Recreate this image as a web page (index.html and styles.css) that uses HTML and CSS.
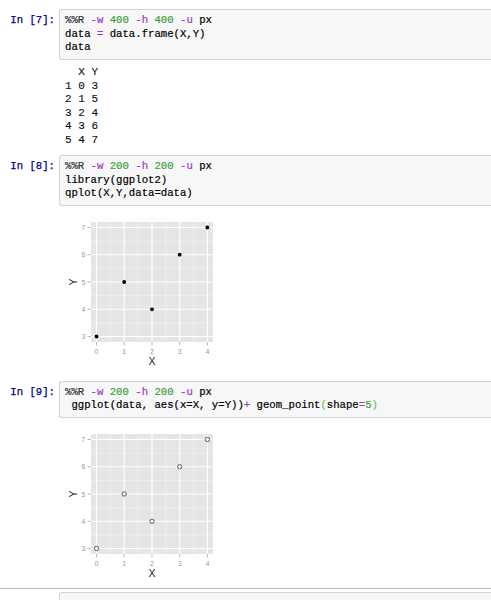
FILE: index.html
```
<!DOCTYPE html>
<html>
<head>
<meta charset="utf-8">
<link rel="stylesheet" href="styles.css">
</head>
<body>
<div class="notebook">

  <div class="cell first">
    <div class="row">
      <div class="prompt">In [7]:</div>
      <pre class="input"><span class="mg">%%R</span> <span class="op">-w</span> <span class="num">400</span> <span class="op">-h</span> <span class="num">400</span> <span class="op">-u</span> px
data <span class="op">=</span> data.frame(X,Y)
data</pre>
    </div>
    <div class="row">
      <div class="prompt"></div>
      <pre class="output-text">  X Y
1 0 3
2 1 5
3 2 4
4 3 6
5 4 7</pre>
    </div>
  </div>

  <div class="cell">
    <div class="row">
      <div class="prompt">In [8]:</div>
      <pre class="input"><span class="mg">%%R</span> <span class="op">-w</span> <span class="num">200</span> <span class="op">-h</span> <span class="num">200</span> <span class="op">-u</span> px
library(ggplot2)
qplot(X,Y,data=data)</pre>
    </div>
    <div class="row">
      <div class="prompt"></div>
      <div class="output-plot">
        <svg class="plot" width="160" height="160" viewBox="0 0 160 160">
          <rect x="26" y="11" width="122" height="120" fill="#e5e5e5"/>
          <g stroke="#f4f4f4" stroke-width="0.6">
            <line x1="45.4" y1="11" x2="45.4" y2="131"/><line x1="73.1" y1="11" x2="73.1" y2="131"/>
            <line x1="100.8" y1="11" x2="100.8" y2="131"/><line x1="128.6" y1="11" x2="128.6" y2="131"/>
            <line x1="26" y1="111.9" x2="148" y2="111.9"/><line x1="26" y1="84.6" x2="148" y2="84.6"/>
            <line x1="26" y1="57.4" x2="148" y2="57.4"/><line x1="26" y1="30.1" x2="148" y2="30.1"/>
          </g>
          <g stroke="#ffffff" stroke-width="1.1">
            <line x1="31.5" y1="11" x2="31.5" y2="131"/><line x1="59.2" y1="11" x2="59.2" y2="131"/>
            <line x1="87" y1="11" x2="87" y2="131"/><line x1="114.7" y1="11" x2="114.7" y2="131"/>
            <line x1="142.4" y1="11" x2="142.4" y2="131"/>
            <line x1="26" y1="125.5" x2="148" y2="125.5"/><line x1="26" y1="98.3" x2="148" y2="98.3"/>
            <line x1="26" y1="71" x2="148" y2="71"/><line x1="26" y1="43.7" x2="148" y2="43.7"/>
            <line x1="26" y1="16.5" x2="148" y2="16.5"/>
          </g>
          <g stroke="#8a8a8a" stroke-width="0.6">
            <line x1="22.5" y1="125.5" x2="26" y2="125.5"/><line x1="22.5" y1="98.3" x2="26" y2="98.3"/>
            <line x1="22.5" y1="71" x2="26" y2="71"/><line x1="22.5" y1="43.7" x2="26" y2="43.7"/>
            <line x1="22.5" y1="16.5" x2="26" y2="16.5"/>
            <line x1="31.5" y1="131" x2="31.5" y2="134.5"/><line x1="59.2" y1="131" x2="59.2" y2="134.5"/>
            <line x1="87" y1="131" x2="87" y2="134.5"/><line x1="114.7" y1="131" x2="114.7" y2="134.5"/>
            <line x1="142.4" y1="131" x2="142.4" y2="134.5"/>
          </g>
          <g class="tick-label" text-anchor="end">
            <text x="20.5" y="128">3</text><text x="20.5" y="100.8">4</text>
            <text x="20.5" y="73.5">5</text><text x="20.5" y="46.2">6</text>
            <text x="20.5" y="19">7</text>
          </g>
          <g class="tick-label" text-anchor="middle">
            <text x="31.5" y="142.5">0</text><text x="59.2" y="142.5">1</text>
            <text x="87" y="142.5">2</text><text x="114.7" y="142.5">3</text>
            <text x="142.4" y="142.5">4</text>
          </g>
          <text class="axis-title" x="87" y="153.5" text-anchor="middle">X</text>
          <text class="axis-title" x="0" y="0" text-anchor="middle" transform="translate(11.5 71) rotate(-90)">Y</text>
          <g fill="#000">
            <circle cx="31.5" cy="125.5" r="1.9"/><circle cx="59.2" cy="71" r="1.9"/>
            <circle cx="87" cy="98.3" r="1.9"/><circle cx="114.7" cy="43.7" r="1.9"/>
            <circle cx="142.4" cy="16.5" r="1.9"/>
          </g>
        </svg>
      </div>
    </div>
  </div>

  <div class="cell">
    <div class="row">
      <div class="prompt">In [9]:</div>
      <pre class="input"><span class="mg">%%R</span> <span class="op">-w</span> <span class="num">200</span> <span class="op">-h</span> <span class="num">200</span> <span class="op">-u</span> px
 ggplot(data, aes(x=X, y=Y))<span class="op">+</span> geom_point<span class="par">(</span>shape<span class="op">=</span><span class="num">5</span><span class="par">)</span></pre>
    </div>
    <div class="row">
      <div class="prompt"></div>
      <div class="output-plot">
        <svg class="plot" width="160" height="160" viewBox="0 0 160 160">
          <rect x="26" y="11" width="122" height="120" fill="#e5e5e5"/>
          <g stroke="#f4f4f4" stroke-width="0.6">
            <line x1="45.4" y1="11" x2="45.4" y2="131"/><line x1="73.1" y1="11" x2="73.1" y2="131"/>
            <line x1="100.8" y1="11" x2="100.8" y2="131"/><line x1="128.6" y1="11" x2="128.6" y2="131"/>
            <line x1="26" y1="111.9" x2="148" y2="111.9"/><line x1="26" y1="84.6" x2="148" y2="84.6"/>
            <line x1="26" y1="57.4" x2="148" y2="57.4"/><line x1="26" y1="30.1" x2="148" y2="30.1"/>
          </g>
          <g stroke="#ffffff" stroke-width="1.1">
            <line x1="31.5" y1="11" x2="31.5" y2="131"/><line x1="59.2" y1="11" x2="59.2" y2="131"/>
            <line x1="87" y1="11" x2="87" y2="131"/><line x1="114.7" y1="11" x2="114.7" y2="131"/>
            <line x1="142.4" y1="11" x2="142.4" y2="131"/>
            <line x1="26" y1="125.5" x2="148" y2="125.5"/><line x1="26" y1="98.3" x2="148" y2="98.3"/>
            <line x1="26" y1="71" x2="148" y2="71"/><line x1="26" y1="43.7" x2="148" y2="43.7"/>
            <line x1="26" y1="16.5" x2="148" y2="16.5"/>
          </g>
          <g stroke="#8a8a8a" stroke-width="0.6">
            <line x1="22.5" y1="125.5" x2="26" y2="125.5"/><line x1="22.5" y1="98.3" x2="26" y2="98.3"/>
            <line x1="22.5" y1="71" x2="26" y2="71"/><line x1="22.5" y1="43.7" x2="26" y2="43.7"/>
            <line x1="22.5" y1="16.5" x2="26" y2="16.5"/>
            <line x1="31.5" y1="131" x2="31.5" y2="134.5"/><line x1="59.2" y1="131" x2="59.2" y2="134.5"/>
            <line x1="87" y1="131" x2="87" y2="134.5"/><line x1="114.7" y1="131" x2="114.7" y2="134.5"/>
            <line x1="142.4" y1="131" x2="142.4" y2="134.5"/>
          </g>
          <g class="tick-label" text-anchor="end">
            <text x="20.5" y="128">3</text><text x="20.5" y="100.8">4</text>
            <text x="20.5" y="73.5">5</text><text x="20.5" y="46.2">6</text>
            <text x="20.5" y="19">7</text>
          </g>
          <g class="tick-label" text-anchor="middle">
            <text x="31.5" y="142.5">0</text><text x="59.2" y="142.5">1</text>
            <text x="87" y="142.5">2</text><text x="114.7" y="142.5">3</text>
            <text x="142.4" y="142.5">4</text>
          </g>
          <text class="axis-title" x="87" y="153.5" text-anchor="middle">X</text>
          <text class="axis-title" x="0" y="0" text-anchor="middle" transform="translate(11.5 71) rotate(-90)">Y</text>
          <g fill="none" stroke="#555" stroke-width="0.9">
            <circle cx="31.5" cy="125.5" r="2.2"/><circle cx="59.2" cy="71" r="2.2"/>
            <circle cx="87" cy="98.3" r="2.2"/><circle cx="114.7" cy="43.7" r="2.2"/>
            <circle cx="142.4" cy="16.5" r="2.2"/>
          </g>
        </svg>
      </div>
    </div>
  </div>

  <div class="cell selected">
    <div class="row">
      <div class="prompt"></div>
      <pre class="input empty"> </pre>
    </div>
  </div>

</div>
</body>
</html>
```

FILE: styles.css
```
html, body {
  margin: 0;
  padding: 0;
  background: #ffffff;
  overflow: hidden;
}

.notebook {
  padding-top: 9px;
}

.cell {
  margin-bottom: 10px;
}

.cell.first {
  margin-bottom: 8px;
}

.row {
  display: flex;
  align-items: flex-start;
}

.prompt {
  flex: 0 0 59px;
  box-sizing: border-box;
  padding: 5px 4px 0 0;
  text-align: right;
  font-family: "Liberation Mono", monospace;
  font-size: 10.65px;
  line-height: 13.5px;
  color: #000080;
  -webkit-text-stroke: 0.25px #000080;
  white-space: pre;
}

.input {
  flex: 1;
  margin: 0;
  padding: 4px 5px;
  background: #f7f7f7;
  border: 1px solid #d2d2d2;
  border-right: none;
  border-radius: 3px 0 0 3px;
  font-family: "Liberation Mono", monospace;
  font-size: 10.65px;
  line-height: 13.5px;
  color: #000;
  -webkit-text-stroke: 0.2px;
  white-space: pre;
  overflow: hidden;
}

.mg { color: #333; }
.op { color: #9a3cc8; }
.num { color: #3f9f3f; }
.par { color: #6cbf6c; }

.output-text {
  margin: 0;
  padding: 6.5px 0 0 6px;
  font-family: "Liberation Mono", monospace;
  font-size: 11px;
  line-height: 13.5px;
  color: #111;
  -webkit-text-stroke: 0.15px;
}

.output-plot {
  padding: 5px 0 0 6px;
}

.plot {
  display: block;
}

.tick-label {
  font-family: "Liberation Sans", sans-serif;
  font-size: 7px;
  fill: #999;
}

.axis-title {
  font-family: "Liberation Sans", sans-serif;
  font-size: 10.5px;
  fill: #222;
}

.cell.selected {
  margin-top: -5px;
  border-top: 1px solid #bdbdbd;
  padding-top: 3px;
}

.input.empty {
  min-height: 27px;
}
```
